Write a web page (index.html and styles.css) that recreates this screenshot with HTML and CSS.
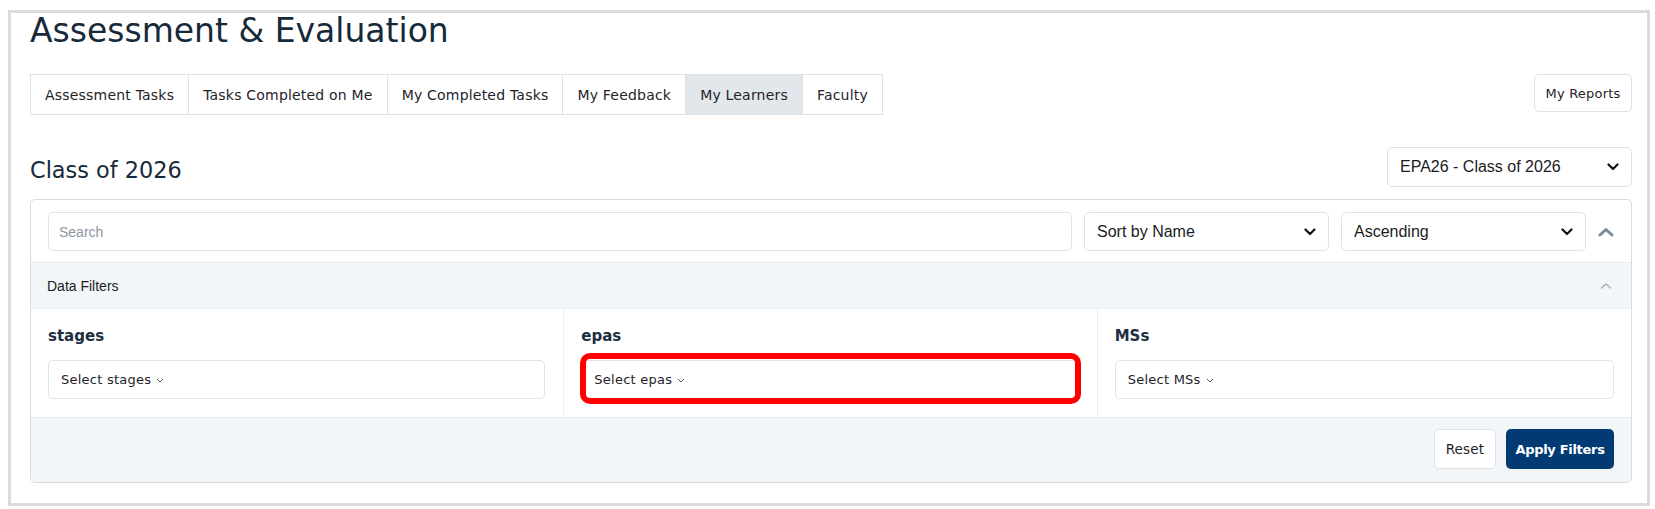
FILE: index.html
```html
<!DOCTYPE html>
<html>
<head>
<meta charset="utf-8">
<link rel="stylesheet" href="styles.css">
</head>
<body>
<div class="frame">
  <h1 class="title">Assessment &amp; Evaluation</h1>
  <div class="nav-row">
    <ul class="tabs">
      <li class="tab">Assessment Tasks</li>
      <li class="tab">Tasks Completed on Me</li>
      <li class="tab">My Completed Tasks</li>
      <li class="tab">My Feedback</li>
      <li class="tab active">My Learners</li>
      <li class="tab">Faculty</li>
    </ul>
    <button class="btn-outline reports">My Reports</button>
  </div>
  <div class="class-row">
    <h2 class="class-title">Class of 2026</h2>
    <div class="select cohort">
      <span>EPA26 - Class of 2026</span>
      <svg class="sel-chev" width="12" height="8" viewBox="0 0 12 8"><path d="M1.5 1.5 L6 6 L10.5 1.5" fill="none" stroke="#111" stroke-width="2.2" stroke-linecap="round" stroke-linejoin="round"/></svg>
    </div>
  </div>
  <div class="card">
    <div class="toolbar">
      <div class="input search"><span class="placeholder">Search</span></div>
      <div class="select sort">
        <span>Sort by Name</span>
        <svg class="sel-chev" width="12" height="8" viewBox="0 0 12 8"><path d="M1.5 1.5 L6 6 L10.5 1.5" fill="none" stroke="#111" stroke-width="2.2" stroke-linecap="round" stroke-linejoin="round"/></svg>
      </div>
      <div class="select sort">
        <span>Ascending</span>
        <svg class="sel-chev" width="12" height="8" viewBox="0 0 12 8"><path d="M1.5 1.5 L6 6 L10.5 1.5" fill="none" stroke="#111" stroke-width="2.2" stroke-linecap="round" stroke-linejoin="round"/></svg>
      </div>
      <div class="collapse">
        <svg width="16" height="10" viewBox="0 0 16 10"><path d="M2 8 L8 2.5 L14 8" fill="none" stroke="#7d8a97" stroke-width="3" stroke-linecap="round" stroke-linejoin="round"/></svg>
      </div>
    </div>
    <div class="filters-head">
      <span>Data Filters</span>
      <svg width="12" height="8" viewBox="0 0 12 8"><path d="M1.5 6 L6 2 L10.5 6" fill="none" stroke="#a3adb7" stroke-width="1.3" stroke-linecap="round" stroke-linejoin="round"/></svg>
    </div>
    <div class="filters">
      <div class="filter-col">
        <div class="filter-label">stages</div>
        <div class="input multi">Select stages<svg class="mini-chev" width="8" height="5" viewBox="0 0 8 5"><path d="M1 1 L4 4 L7 1" fill="none" stroke="#555" stroke-width="1"/></svg></div>
      </div>
      <div class="filter-col">
        <div class="filter-label">epas</div>
        <div class="input multi highlighted">Select epas<svg class="mini-chev" width="8" height="5" viewBox="0 0 8 5"><path d="M1 1 L4 4 L7 1" fill="none" stroke="#555" stroke-width="1"/></svg><span class="mark"></span></div>
      </div>
      <div class="filter-col last">
        <div class="filter-label">MSs</div>
        <div class="input multi">Select MSs<svg class="mini-chev" width="8" height="5" viewBox="0 0 8 5"><path d="M1 1 L4 4 L7 1" fill="none" stroke="#555" stroke-width="1"/></svg></div>
      </div>
    </div>
    <div class="filters-foot">
      <button class="btn-outline reset">Reset</button>
      <button class="btn-primary">Apply Filters</button>
    </div>
  </div>
</div>
</body>
</html>
```
FILE: styles.css
```css
* { box-sizing: border-box; }
html, body { background: #fff; }
body {
  margin: 0;
  padding: 10px 5px 0 8px;
  font-family: "DejaVu Sans", Verdana, sans-serif;
  color: #1b2a38;
}
.frame {
  border: 3px solid #dcdcdc;
  padding: 1px 15px 20px 19px;
}
.title {
  margin: 0;
  font-size: 33px;
  font-weight: normal;
  line-height: 33px;
  color: #172a3a;
}
.nav-row {
  margin-top: 27px;
  display: flex;
  justify-content: space-between;
  align-items: flex-start;
}
.tabs {
  list-style: none;
  margin: 0;
  padding: 0;
  display: flex;
}
.tab {
  height: 41px;
  display: flex;
  align-items: center;
  padding: 0 14px;
  font-size: 14px;
  letter-spacing: 0.2px;
  color: #1f2328;
  border: 1px solid #dde2e7;
  border-left: none;
  background: #fff;
}
.tab:first-child { border-left: 1px solid #dde2e7; }
.tab.active { background: #e2e7ec; }
.btn-outline {
  font-family: "DejaVu Sans", Verdana, sans-serif;
  background: #fff;
  border: 1px solid #dde2e7;
  border-radius: 5px;
  color: #1f2328;
  font-size: 13px;
  letter-spacing: 0.2px;
}
.reports {
  height: 38px;
  width: 98px;
  padding: 0;
}
.class-row {
  margin-top: 32px;
  display: flex;
  justify-content: space-between;
  align-items: center;
}
.class-title {
  margin: 0;
  font-size: 22.4px;
  font-weight: normal;
  color: #172a3a;
  padding-top: 5px;
}
.select {
  display: flex;
  align-items: center;
  justify-content: space-between;
  border: 1px solid #dee2e6;
  border-radius: 5px;
  background: #fff;
  font-family: "Liberation Sans", Arial, sans-serif;
  font-size: 16px;
  color: #1b1b1b;
  padding: 0 12px 0 12px;
}
.cohort {
  width: 245px;
  height: 40px;
}
.card {
  margin-top: 12px;
  border: 1px solid #d6dce2;
  border-radius: 5px;
  overflow: hidden;
}
.toolbar {
  display: flex;
  gap: 12px;
  padding: 12px 5px 11px 17px;
  align-items: center;
}
.input {
  height: 39px;
  border: 1px solid #dfe3e8;
  border-radius: 5px;
  background: #fff;
  display: flex;
  align-items: center;
}
.search {
  flex: 1;
  padding-left: 10px;
}
.placeholder {
  font-family: "Liberation Sans", Arial, sans-serif;
  font-size: 14px;
  color: #8c96a1;
}
.sort {
  width: 245px;
  height: 39px;
}
.collapse {
  width: 28px;
  display: flex;
  align-items: center;
  padding-left: 0;
}
.filters-head {
  height: 46px;
  background: #f3f6f9;
  border-top: 1px solid #e8ecf0;
  display: flex;
  align-items: center;
  justify-content: space-between;
  padding: 0 19px 0 16px;
  font-family: "Liberation Sans", Arial, sans-serif;
  font-size: 14px;
  color: #1b1b1b;
}
.filters {
  display: grid;
  grid-template-columns: 1fr 1fr 1fr;
  border-top: 1px solid #eaeef2;
  border-bottom: 1px solid #e6eaee;
}
.filter-col {
  padding: 16px 18px 18px 17px;
  border-right: 1px solid #eaeef2;
}
.filter-col.last { border-right: none; padding-right: 17px; }
.filter-label {
  font-weight: bold;
  font-size: 15px;
  line-height: 22px;
  color: #1c2e40;
  margin-bottom: 13px;
}
.multi {
  padding-left: 12px;
  font-size: 13px;
  letter-spacing: 0.25px;
  color: #1f2328;
  position: relative;
}
.mini-chev { margin-left: 5px; margin-top: 2px; }
.mark {
  position: absolute;
  top: -8px;
  left: -2px;
  right: -3px;
  bottom: -6px;
  border: 6px solid #ff0000;
  border-radius: 10px;
  pointer-events: none;
}
.filters-foot {
  background: #f3f6f9;
  display: flex;
  justify-content: flex-end;
  gap: 10px;
  padding: 11px 17px 13px 16px;
}
.reset {
  width: 62px;
  height: 40px;
  padding: 0;
  font-size: 13.5px;
}
.btn-primary {
  width: 108px;
  height: 40px;
  padding: 0;
  border: none;
  border-radius: 5px;
  background: #023a74;
  color: #fff;
  font-family: "DejaVu Sans", Verdana, sans-serif;
  font-size: 13px;
  font-weight: bold;
  letter-spacing: -0.3px;
}
```
